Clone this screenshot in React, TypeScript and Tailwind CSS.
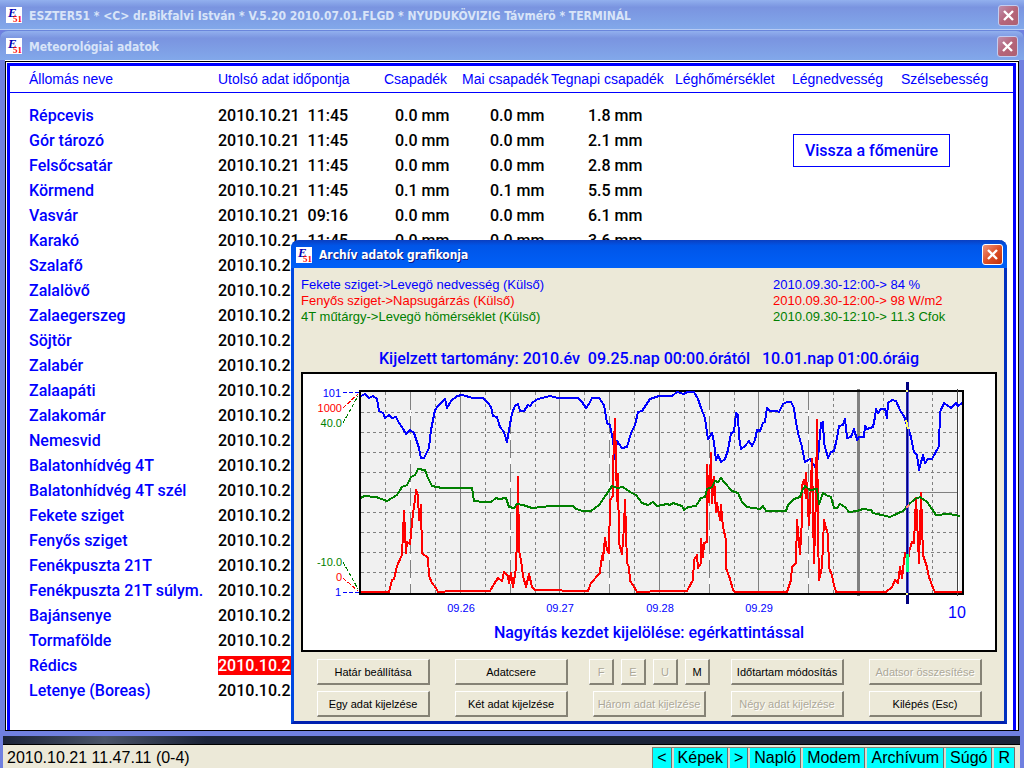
import type { ReactNode } from 'react'
import clsx from 'clsx'

type Station = { name: string; time?: string; rain?: string; today?: string; yesterday?: string; alert?: boolean }

const stations: Station[] = [
  { name: 'Répcevis', time: '11:45', rain: '0.0 mm', today: '0.0 mm', yesterday: '1.8 mm' },
  { name: 'Gór tározó', time: '11:45', rain: '0.0 mm', today: '0.0 mm', yesterday: '2.1 mm' },
  { name: 'Felsőcsatár', time: '11:45', rain: '0.0 mm', today: '0.0 mm', yesterday: '2.8 mm' },
  { name: 'Körmend', time: '11:45', rain: '0.1 mm', today: '0.1 mm', yesterday: '5.5 mm' },
  { name: 'Vasvár', time: '09:16', rain: '0.0 mm', today: '0.0 mm', yesterday: '6.1 mm' },
  { name: 'Karakó', time: '11:45', rain: '0.0 mm', today: '0.0 mm', yesterday: '3.6 mm' },
  { name: 'Szalafő' },
  { name: 'Zalalövő' },
  { name: 'Zalaegerszeg' },
  { name: 'Söjtör' },
  { name: 'Zalabér' },
  { name: 'Zalaapáti' },
  { name: 'Zalakomár' },
  { name: 'Nemesvid' },
  { name: 'Balatonhídvég 4T' },
  { name: 'Balatonhídvég 4T szél' },
  { name: 'Fekete sziget' },
  { name: 'Fenyős sziget' },
  { name: 'Fenékpuszta 21T' },
  { name: 'Fenékpuszta 21T súlym.' },
  { name: 'Bajánsenye' },
  { name: 'Tormafölde' },
  { name: 'Rédics', alert: true },
  { name: 'Letenye (Boreas)' },
]

const headers = [
  'Állomás neve',
  'Utolsó adat időpontja',
  'Csapadék',
  'Mai csapadék',
  'Tegnapi csapadék',
  'Léghőmérséklet',
  'Légnedvesség',
  'Szélsebesség',
]

const humidity =
  '361,396 365,394 369,398 373,396 377,399 379,411 383,413 385,418 389,415 392,418 396,417 399,423 402,427 406,434 410,430 414,433 417,442 419,448 421,458 424,458 429,448 431,430 435,410 438,406 445,399 447,408 451,401 457,396 462,395 473,398 483,398 488,403 491,407 493,416 497,417 500,427 504,432 507,442 509,430 512,413 515,406 518,404 520,411 524,411 528,405 530,406 533,402 538,399 550,396 558,398 578,398 582,402 586,408 589,404 592,398 599,398 604,405 607,423 610,425 613,440 615,459 617,441 622,448 627,447 631,433 635,425 638,412 642,411 650,399 659,396 672,396 677,392 684,394 687,392 694,392 698,399 701,408 705,418 708,439 712,433 714,442 716,460 718,455 721,462 725,459 728,450 731,433 734,432 736,413 738,415 739,437 741,449 745,446 749,441 752,446 755,440 757,430 760,431 763,423 765,422 767,408 770,411 777,411 779,412 783,404 787,402 791,402 794,408 796,422 798,433 802,447 805,462 810,459 815,467 818,458 821,423 823,422 824,443 828,458 831,452 834,451 837,438 839,426 843,425 845,419 847,438 851,437 854,429 857,440 859,437 864,437 865,426 867,429 873,427 875,417 876,409 878,413 881,409 885,409 887,418 888,403 892,400 896,401 901,412 904,416 907,425 911,437 914,452 917,455 919,470 923,455 925,463 928,459 932,459 939,446 940,412 944,403 951,408 956,403 958,406 962,403'

const radiation =
  '361,592 389,592 392,580 394,579 397,566 402,555 404,511 406,553 407,542 410,544 413,513 415,500 416,490 418,495 419,520 421,505 422,553 428,558 429,576 432,583 436,588 438,592 452,591 468,591 490,591 494,584 498,578 502,581 504,572 508,576 509,583 511,573 513,587 516,568 517,537 518,477 519,550 521,560 523,576 526,587 529,574 532,587 535,590 588,591 591,583 600,573 601,562 603,553 603,560 605,538 607,550 609,553 610,500 613,496 613,467 615,419 617,501 618,474 619,543 622,554 624,527 625,500 627,563 629,567 630,581 633,585 637,592 663,591 687,591 693,580 694,560 697,555 698,568 701,563 701,539 703,557 704,543 707,542 707,465 709,502 711,453 712,503 714,477 716,512 717,503 720,520 721,505 723,527 726,540 726,568 730,579 733,590 735,592 787,592 791,580 792,567 796,563 797,520 800,554 802,520 802,485 804,480 806,498 806,473 809,525 812,459 814,563 816,495 817,420 818,533 819,580 822,567 824,520 828,535 829,568 832,575 834,585 836,592 886,592 892,587 895,580 898,583 900,567 902,578 905,553 908,562 909,552 912,542 914,543 916,498 919,563 921,493 923,555 927,567 929,577 933,588 935,592 962,592'

const temperature =
  '361,498 364,496 376,497 387,501 397,495 402,487 407,485 411,477 415,475 418,469 425,470 428,478 432,486 442,488 472,488 474,501 483,502 491,502 496,498 499,499 506,498 509,507 514,508 517,504 523,505 532,508 542,507 550,506 573,506 576,509 583,511 591,511 599,505 606,495 612,486 617,488 623,487 630,492 636,495 642,503 648,505 653,502 657,506 667,504 670,505 673,503 682,506 684,510 688,507 696,506 701,498 705,497 707,489 712,487 715,481 718,482 721,478 724,482 732,491 738,493 742,502 747,507 760,509 763,506 766,511 786,511 788,505 794,499 800,497 802,491 805,486 810,490 817,489 819,504 823,493 826,495 831,497 834,508 837,508 840,504 845,507 849,512 857,511 863,509 871,510 873,513 890,517 903,511 908,505 915,499 920,497 927,502 932,509 936,515 949,514 960,516'

const quarterLines = [385, 435, 485, 535, 584, 634, 684, 734, 783, 833, 883, 932]
const noonLines = [410, 510, 609, 709, 808]
const dayLines = [460, 559, 659, 758]
const dashedRows = [412, 432, 452, 472, 512, 532, 552, 572]

function Logo() {
  return (
    <svg viewBox="0 0 16 16" className="h-4 w-4 shrink-0" aria-hidden="true">
      <rect width="16" height="16" fill="#fff" />
      <text x="2" y="10" fontFamily="Liberation Serif, serif" fontSize="13" fontWeight="bold" fontStyle="italic" fill="#0000b4">E</text>
      <text x="7" y="15" fontFamily="Liberation Serif, serif" fontSize="9" fontWeight="bold" fill="#f00">51</text>
    </svg>
  )
}

function CloseButton({ active }: { active?: boolean }) {
  return (
    <button
      type="button"
      aria-label="Bezárás"
      className={clsx(
        'flex h-[21px] w-[21px] shrink-0 items-center justify-center rounded-[3px] border',
        active
          ? 'border-white bg-linear-to-br from-[#f0947a] via-[#dd5028] to-[#c03008]'
          : 'border-[#c3cdf0] bg-linear-to-br from-[#bd8fae] via-[#b5657a] to-[#ae6070]',
      )}
    >
      <svg viewBox="0 0 19 19" className="h-[19px] w-[19px]" aria-hidden="true">
        <path d="M5 5 L14 14 M14 5 L5 14" stroke="#fff" strokeWidth="2.4" />
      </svg>
    </button>
  )
}

function TitleBar({ title, active, className }: { title: string; active?: boolean; className?: string }) {
  return (
    <header
      className={clsx(
        'flex items-center justify-between pt-px',
        active
          ? 'bg-linear-to-b from-[#0a3fc0] via-[#0055e8] via-20% to-[#0060f8]'
          : 'bg-linear-to-b from-[#92b0ee] via-[#7a94e0] via-25% to-[#82a8ea]',
        className,
      )}
    >
      <div className="flex min-w-0 items-center gap-[7px]">
        <Logo />
        <h1
          className={clsx(
            'truncate pt-px font-["DejaVu_Sans_Condensed","DejaVu_Sans",sans-serif] text-[12px] leading-4 font-bold whitespace-pre',
            active ? 'text-white [text-shadow:1px_1px_0_#0a1883]' : 'text-[#d8e4f8]',
          )}
        >
          {title}
        </h1>
      </div>
      <CloseButton active={active} />
    </header>
  )
}

function StationTable() {
  return (
    <table className="w-full table-fixed border-collapse text-left whitespace-pre">
      <colgroup>
        <col className="w-[208px]" />
        <col className="w-[166px]" />
        <col className="w-[78px]" />
        <col className="w-[89px]" />
        <col className="w-[124px]" />
        <col className="w-[117px]" />
        <col className="w-[109px]" />
        <col />
      </colgroup>
      <thead>
        <tr className="h-[26px] border-b border-[#0000ff] text-[14px] leading-4 text-[#0000ff]">
          {headers.map((h, i) => (
            <th key={h} scope="col" className={clsx('font-normal', i === 0 && 'pl-[19px]')}>{h}</th>
          ))}
        </tr>
      </thead>
      <tbody className="font-[Roboto,sans-serif] text-[16px] leading-5 font-medium text-black before:block before:h-[11px]">
        {stations.map(s => (
          <tr key={s.name} className="h-[25px]">
            <th scope="row" className="pl-[19px] font-medium text-[#0000ff]">{s.name}</th>
            <td>
              <span className={clsx(s.alert && 'bg-[#ff0000] text-white')}>2010.10.21{s.time && `  ${s.time}`}</span>
            </td>
            <td className="pl-[11px]">{s.rain}</td>
            <td className="pl-[28px]">{s.today}</td>
            <td className="pl-[37px]">{s.yesterday}</td>
            <td />
            <td />
            <td />
          </tr>
        ))}
      </tbody>
    </table>
  )
}

function Chart() {
  return (
    <svg
      viewBox="303 374 692 248"
      className="block w-full"
      fontFamily="'Liberation Sans', sans-serif"
      fontSize="11"
      shapeRendering="crispEdges"
      role="img"
    >
      <rect x="360" y="391" width="602" height="203" fill="#f0f0f0" />

      {/* Grid */}
      <g stroke="#808080" strokeWidth="1" fill="none">
        {dashedRows.map(y => <path key={y} d={`M361 ${y}.5 H957`} strokeDasharray="3 3" />)}
        {quarterLines.map(x => <path key={x} d={`M${x}.5 392 V593`} strokeDasharray="3 3" />)}
        <path d="M361 492.5 H957" />
      </g>
      {noonLines.map(x => (
        <g key={x}>
          <path d={`M${x}.5 392 V593`} stroke="#fff" />
          <path d={`M${x}.5 392 V593`} stroke="#808080" strokeDasharray="18 6" />
        </g>
      ))}
      {dayLines.map(x => <path key={x} d={`M${x}.5 390 V595`} stroke="#808080" />)}
      <path d="M858.5 389 V596" stroke="#808080" strokeWidth="3" />

      {/* Frame */}
      <path d="M360 595 V391 H963 V595" fill="none" stroke="#000" strokeWidth="2" />
      <path d="M359 594 H964" stroke="#000" strokeWidth="2" />
      <path d="M957.5 389 V596" stroke="#404040" />
      <path d="M958.5 392 V593" stroke="#fff" />

      {/* Series */}
      <g fill="none" strokeWidth="2" strokeLinejoin="round">
        <polyline points={humidity} stroke="#0000ff" />
        <polyline points={radiation} stroke="#ff0000" />
        <polyline points={temperature} stroke="#008000" />
      </g>

      {/* Cursor */}
      <rect x="906" y="382" width="3" height="222" fill="#000080" />
      <rect x="906" y="392" width="1" height="201" fill="#2020b0" />
      <rect x="908" y="392" width="1" height="201" fill="#6060e8" />
      <rect x="906" y="390" width="2" height="2" fill="#ffff80" />
      <path d="M906 420 L908 429" stroke="#ffff60" strokeWidth="2" />
      <path d="M906 508 L909 505" stroke="#ff8080" strokeWidth="2" />
      <rect x="906" y="554" width="3" height="18" fill="#00ff80" />
      <rect x="906" y="593" width="2" height="2" fill="#ffff80" />

      {/* Scale labels */}
      <g textAnchor="end">
        <text x="341" y="397" fill="#0000ff">101</text>
        <text x="342" y="412" fill="#f00">1000</text>
        <text x="342" y="427" fill="#008000">40.0</text>
        <text x="342" y="566" fill="#008000">-10.0</text>
        <text x="342" y="581" fill="#f00">0</text>
        <text x="341" y="596" fill="#0000ff">1</text>
      </g>
      <g fill="none" strokeWidth="1" strokeDasharray="4 2">
        <path d="M343 392.5 H359" stroke="#0000ff" />
        <path d="M343 408 L358 394" stroke="#f00" />
        <path d="M343 423 L358 396" stroke="#008000" />
        <path d="M343 562 L358 589" stroke="#008000" />
        <path d="M343 578 L358 591" stroke="#f00" />
        <path d="M343 592.5 H359" stroke="#0000ff" />
      </g>
      <g textAnchor="middle" fill="#0000ff">
        <text x="461" y="612">09.26</text>
        <text x="560" y="612">09.27</text>
        <text x="660" y="612">09.28</text>
        <text x="759" y="612">09.29</text>
        <text x="957" y="618" fontSize="16">10</text>
      </g>
    </svg>
  )
}

function PushButton({ children, disabled, small }: { children: ReactNode; disabled?: boolean; small?: boolean }) {
  return (
    <button
      type="button"
      disabled={disabled}
      className={clsx(
        'h-[26px] shrink-0 border-t border-r-2 border-b-2 border-l border-t-white border-r-[#858275] border-b-[#858275] border-l-white bg-[#ece9d8] text-[11px] leading-4 whitespace-nowrap',
        small ? 'w-[25px]' : 'w-full',
        disabled ? 'text-[#aca899] [text-shadow:1px_1px_0_#fff]' : 'text-black',
      )}
    >
      {children}
    </button>
  )
}

function ArchiveDialog() {
  return (
    <section className="absolute top-[240px] right-[17px] left-[291px] z-10 rounded-t-lg border-r-[3px] border-b-[3px] border-l-[3px] border-r-[#0030c0] border-b-[#0020b0] border-l-[#0048e0] bg-[#ece9d8]">
      <TitleBar title="Archív adatok grafikonja" active className="-mx-[3px] h-[28px] rounded-t-lg pr-1 pl-[5px]" />

      <div className="px-[7px] pt-[9px]">
        <div className="flex text-[13px] leading-4 whitespace-pre">
          <ul className="flex-1">
            <li className="text-[#0000ff]">{'Fekete sziget->Levegö nedvesség (Külső)'}</li>
            <li className="text-[#f00]">{'Fenyős sziget->Napsugárzás (Külső)'}</li>
            <li className="text-[#008000]">{'4T műtárgy->Levegö hömérséklet (Külső)'}</li>
          </ul>
          <ul className="w-[224px]">
            <li className="text-[#0000ff]">{'2010.09.30-12:00-> 84 %'}</li>
            <li className="text-[#f00]">{'2010.09.30-12:00-> 98 W/m2'}</li>
            <li className="text-[#008000]">{'2010.09.30-12:10-> 11.3 Cfok'}</li>
          </ul>
        </div>

        <h2 className="mt-6 text-center font-[Roboto,sans-serif] text-[16px] leading-5 font-medium whitespace-pre text-[#0000ff]">
          Kijelzett tartomány: 2010.év  09.25.nap 00:00.órától   10.01.nap 01:00.óráig
        </h2>

        <div className="mt-[3px] border-2 border-black bg-white pb-[7px]">
          <Chart />
          <p className="mt-px text-center font-[Roboto,sans-serif] text-[16px] leading-5 font-medium text-[#0000ff]">
            Nagyítás kezdet kijelölése: egérkattintással
          </p>
        </div>
      </div>

      <div className="grid grid-cols-5 gap-x-[25px] gap-y-[6px] pt-[7px] pr-[22px] pb-1 pl-[23px]">
        <PushButton>Határ beállítása</PushButton>
        <PushButton>Adatcsere</PushButton>
        <div className="flex justify-center gap-[7px]">
          <PushButton small disabled>F</PushButton>
          <PushButton small disabled>E</PushButton>
          <PushButton small disabled>U</PushButton>
          <PushButton small>M</PushButton>
        </div>
        <PushButton>Időtartam módosítás</PushButton>
        <PushButton disabled>Adatsor összesítése</PushButton>
        <PushButton>Egy adat kijelzése</PushButton>
        <PushButton>Két adat kijelzése</PushButton>
        <PushButton disabled>Három adat kijelzése</PushButton>
        <PushButton disabled>Négy adat kijelzése</PushButton>
        <PushButton>Kilépés (Esc)</PushButton>
      </div>
    </section>
  )
}

function StatusBar() {
  return (
    <footer className="mr-1 ml-[3px] flex h-6 items-end justify-between border-t border-black bg-[#ece9d8] pr-[5px] pl-1 text-[16px] leading-5 text-black">
      <span>2010.10.21 11.47.11 (0-4)</span>
      <nav className="flex h-[21px] gap-[2px] border-t border-l border-[#858275] bg-[#dcd9cc]">
        {['<', 'Képek', '>', 'Napló', 'Modem', 'Archívum', 'Súgó', 'R'].map(label => (
          <button key={label} type="button" className="border-r border-[#707070] bg-[#00ffff] px-1 leading-5">
            {label}
          </button>
        ))}
      </nav>
    </footer>
  )
}

export default function App() {
  return (
    <div className='relative flex min-h-screen flex-col bg-[#7080e0] font-["Liberation_Sans",Arial,sans-serif]'>
      <TitleBar
        title="ESZTER51 * <C> dr.Bikfalvi István * V.5.20 2010.07.01.FLGD * NYUDUKÖVIZIG Távmérö * TERMINÁL"
        className="h-[30px] border-b border-[#b8ccf4] pr-[5px] pl-[6px]"
      />
      <TitleBar title="Meteorológiai adatok" className="h-[30px] rounded-t-lg border-t border-[#6a86dc] pr-[6px] pl-[6px]" />

      <main className="mx-[5px] flex flex-1 flex-col border-t border-white bg-white">
        <div className="flex flex-1 flex-col border border-black pt-px pr-[2px] pl-px">
          <div className="relative flex-1 border-x-[3px] border-t-[3px] border-[#0000ff]">
            <StationTable />
            <button
              type="button"
              className="absolute top-[68px] right-[63px] h-[33px] w-[157px] border border-[#0000ff] bg-white font-[Roboto,sans-serif] text-[16px] leading-5 font-medium text-[#0000ff]"
            >
              Vissza a főmenüre
            </button>
          </div>
        </div>
      </main>

      <div className="mt-[5px] mr-1 ml-[3px] h-2 bg-linear-to-r from-[#1c2438] via-[#4a5468] via-10% to-[#1c2438] to-20%" />
      <StatusBar />
      <ArchiveDialog />
    </div>
  )
}
